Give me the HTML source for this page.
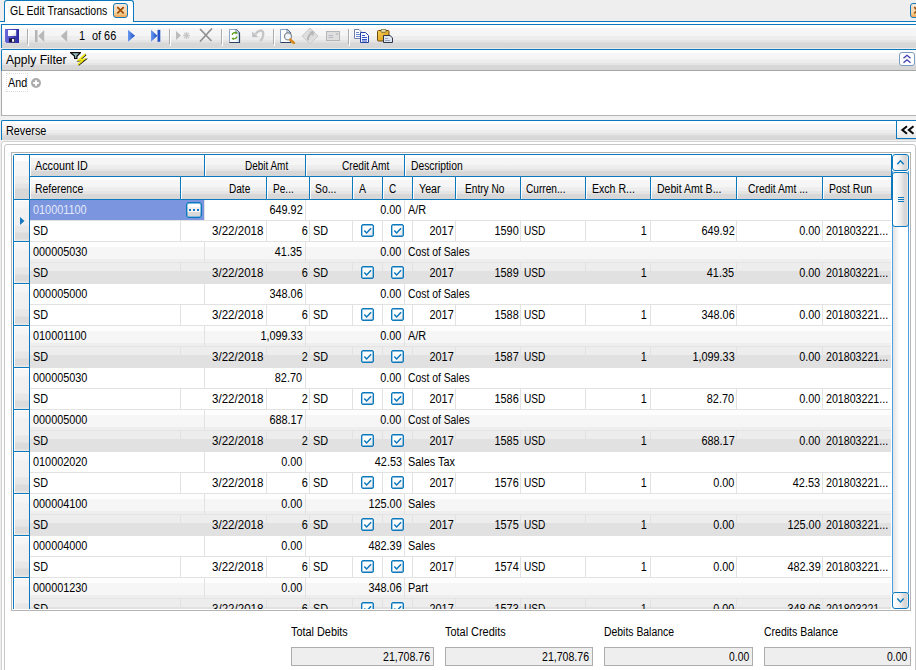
<!DOCTYPE html><html><head><meta charset="utf-8"><title>GL Edit Transactions</title><style>
*{box-sizing:border-box;margin:0;padding:0}
html,body{width:916px;height:670px;overflow:hidden;background:#eee}
body{position:relative;font-family:"Liberation Sans",sans-serif;font-size:11px;color:#000}
.a{position:absolute}
.t{position:absolute;white-space:nowrap;font-size:12px;line-height:13px;transform:scaleX(.906);transform-origin:0 0}
.t.r{transform-origin:100% 0}
.s{position:absolute;white-space:nowrap;font-size:12px;line-height:14px;transform-origin:0 0}
.glass{background:linear-gradient(#fff 0,#fff 14%,#f6f6f6 15%,#f5f5f5 46%,#eee 48%,#ededed 64%,#e5e5e5 66%,#e4e4e4 75%,#d8d8d8 77%,#d6d6d6 100%)}
.hd{position:absolute;background:linear-gradient(#fff 0,#fff 14%,#f6f6f6 15%,#f5f5f5 46%,#eee 48%,#ededed 64%,#e5e5e5 66%,#e4e4e4 75%,#d8d8d8 77%,#d6d6d6 100%);box-shadow:inset 1px 0 #fff}
.bl{position:absolute;background:#0c79bd}
.r{text-align:right}
.cb{position:absolute;width:13px;height:13px;border:1px solid #0c79bd;background:linear-gradient(135deg,#fff 0,#fff 45%,#e2e2e2 100%);border-radius:2px;box-shadow:inset 0 0 0 0.400px #0c79bd}
.hl{position:absolute;height:1px;background:#e2e2e2}
.vl{position:absolute;width:1px;background:#e2e2e2}
.alt{position:absolute;height:42px;background:linear-gradient(#fdfdfd 0,#fdfdfd 5px,#f6f6f6 5px,#f6f6f6 17px,#eee 17px,#eee 20px,#e4e4e4 20px,#e4e4e4 21px,#ededed 21px,#ededed 29px,#e1e1e1 29px,#e1e1e1 42px)}
.sel{position:absolute;width:15px;background:linear-gradient(#fff 0,#fff 1px,#f7f7f7 1px,#f5f5f5 8px,#f1f1f1 9px,#f0f0f0 25px,#e8e8e8 26px,#e7e7e7 32px,#dcdcdc 33px,#dbdbdb 39px,#e8e8e8 40px,#e8e8e8 41px);box-shadow:inset 1px 0 #fff}
</style></head><body>
<div class="a" style="left:0;top:21px;width:916px;height:4px;background:#fff;border-top:1px solid #0c79bd;border-bottom:1px solid #0c79bd"></div>
<div class="a" style="left:0;top:24px;width:1px;height:120px;background:#eee"></div>
<div class="a" style="left:4px;top:0;width:130px;height:22px;background:#fff;border:1px solid #0c79bd;border-bottom:none;border-radius:3px 3px 0 0"></div>
<div class="a" style="left:5px;top:21px;width:128px;height:1px;background:#fff"></div>
<div class="s" style="left:9.5px;top:4px;transform:scaleX(0.877);">GL Edit Transactions</div>
<div class="a" style="left:113px;top:3px;width:15px;height:15px;border:1px solid #1478b8;border-radius:3px;background:linear-gradient(#f3ebe2 0,#f6dcc0 25%,#fbd2a4 70%,#ecc88c 72%,#ecc88c 84%,#fbb060 86%)"></div>
<svg class="a" style="left:113px;top:3px" width="15" height="15" viewBox="0 0 15 15"><path d="M4.300 4.200L10.700 10.300M10.700 4.200L4.300 10.300" stroke="#9c4c00" stroke-width="1.700" fill="none"/></svg>
<div class="a" style="left:910px;top:3px;width:15px;height:15px;border:1px solid #1478b8;border-radius:3px;background:linear-gradient(#f3ebe2 0,#f6dcc0 25%,#fbd2a4 70%,#ecc88c 72%,#ecc88c 84%,#fbb060 86%)"></div>
<svg class="a" style="left:910px;top:3px" width="15" height="15" viewBox="0 0 15 15"><path d="M4.300 4.200L10.700 10.300M10.700 4.200L4.300 10.300" stroke="#9c4c00" stroke-width="1.700" fill="none"/></svg>
<div class="a glass" style="left:1px;top:25px;width:915px;height:23px;border-left:1px solid #0c79bd"></div>
<div class="a" style="left:1px;top:48px;width:915px;height:1px;background:#ececec"></div>
<svg class="a" style="left:5px;top:29px" width="14" height="14" viewBox="0 0 14 14"><defs><linearGradient id="sv" x1="0" x2="1"><stop offset="0" stop-color="#6e6cdc"/><stop offset="1" stop-color="#2a28a0"/></linearGradient><linearGradient id="sw" x1="0" y1="0" x2="1" y2="1"><stop offset="0.550" stop-color="#fff"/><stop offset="1" stop-color="#cdcdd6"/></linearGradient></defs><path d="M0 0H14V14H1.500L0 12.500Z" fill="url(#sv)"/><rect x="3" y="1" width="8.200" height="6" fill="url(#sw)"/><rect x="4" y="9.300" width="6" height="4" fill="#16163c"/><rect x="7" y="10" width="2.200" height="2.800" fill="#f0f0f6"/></svg>
<div class="a" style="left:27px;top:29px;width:1px;height:15px;background:#acacac"></div><div class="a" style="left:28px;top:29px;width:1px;height:17px;background:#fff"></div>
<svg class="a" style="left:34px;top:29px" width="12" height="14" viewBox="0 0 12 14"><rect x="1" y="1" width="2.500" height="12" fill="#b4b4b4"/><path d="M10.200 1L10.200 13L4.200 7Z" fill="#b8b8b8"/></svg>
<svg class="a" style="left:59px;top:29px" width="10" height="14" viewBox="0 0 10 14"><path d="M8.200 1L8.200 13L1.800 7Z" fill="#b8b8b8"/></svg>
<div class="t" style="left:79px;top:30px">1</div><div class="t" style="left:91.500px;top:30px">of 66</div>
<svg class="a" style="left:127px;top:29px" width="10" height="14" viewBox="0 0 10 14"><defs><linearGradient id="bt" x1="0" x2="1"><stop offset="0" stop-color="#6a9af0"/><stop offset="1" stop-color="#1c4cc0"/></linearGradient></defs><path d="M1 0.800L1 12.800L8 6.800Z" fill="url(#bt)"/></svg>
<svg class="a" style="left:150px;top:29px" width="12" height="14" viewBox="0 0 12 14"><path d="M1 0.800L1 12.800L7.500 6.800Z" fill="url(#bt)"/><rect x="7.500" y="0.800" width="2.800" height="12" fill="#2454c8"/></svg>
<div class="a" style="left:169px;top:29px;width:1px;height:15px;background:#acacac"></div><div class="a" style="left:170px;top:29px;width:1px;height:17px;background:#fff"></div>
<svg class="a" style="left:175px;top:30px" width="17" height="12" viewBox="0 0 17 12"><path d="M1 1L1 10L6 5.500Z" fill="#bcbcbc"/><path d="M11.500 2v7M8 5.500h7M9 3l5 5M14 3l-5 5" stroke="#c8c8c8" stroke-width="1.200"/></svg>
<svg class="a" style="left:198px;top:28px" width="16" height="15" viewBox="0 0 16 15"><path d="M2.500 1.500L13 12.500M13.500 1L2.500 13" stroke="#909090" stroke-width="1.700" fill="none" stroke-linecap="round"/></svg>
<div class="a" style="left:221px;top:29px;width:1px;height:15px;background:#acacac"></div><div class="a" style="left:222px;top:29px;width:1px;height:17px;background:#fff"></div>
<svg class="a" style="left:229px;top:29px" width="12" height="14" viewBox="0 0 12 14"><defs><linearGradient id="dg" x1="0" x2="1"><stop offset="0.500" stop-color="#fff"/><stop offset="1" stop-color="#d4e2f4"/></linearGradient></defs><path d="M0.500 0.500H7L10.500 4V13.500H0.500Z" fill="url(#dg)" stroke="#8ea6c6"/><path d="M7 0.500L10.500 4V13.500H0.500" fill="none" stroke="#2c4460" stroke-width="1.200"/><path d="M7 0.500V4H10.500" fill="#e4ecf8" stroke="#5a7090" stroke-width="0.700"/><path d="M3.200 5.800C3.500 4 5.500 3.300 7 3.600M7.800 7.600C7.500 9.600 5.500 10 4 9.700" stroke="#5c9c18" stroke-width="1.300" fill="none"/><path d="M6.500 2.200L8.600 3.900L6.300 5.200Z M4.500 8.300L2.400 9.600L4.700 11.200Z" fill="#5c9c18"/></svg>
<svg class="a" style="left:250px;top:28px" width="16" height="15" viewBox="0 0 16 15"><path d="M5.500 6.200C8 2.200 13 0.800 13.200 5.500C13.300 9 12 11.500 10.200 13" stroke="#c6c6c6" stroke-width="2.400" fill="none"/><path d="M2 3.500L2.300 9.300L8.300 9Z" fill="#c0c0c4"/></svg>
<div class="a" style="left:273px;top:29px;width:1px;height:15px;background:#acacac"></div><div class="a" style="left:274px;top:29px;width:1px;height:17px;background:#fff"></div>
<svg class="a" style="left:280px;top:29px" width="16" height="15" viewBox="0 0 16 15"><path d="M0.500 0.500H7L10.500 4V13.500H0.500Z" fill="#fff" stroke="#86a2c6"/><path d="M7 0.500L10.500 4V13.500H0.500" fill="none" stroke="#2c4460" stroke-width="1.200"/><path d="M7 0.500V4H10.500" fill="#e4ecf8" stroke="#5a7090" stroke-width="0.700"/><circle cx="8" cy="7.400" r="3.500" fill="#eef6fd" stroke="#8a8e94" stroke-width="1.300"/><path d="M10.300 10.700L13.800 14" stroke="#d8881c" stroke-width="2.600" stroke-linecap="round"/></svg>
<svg class="a" style="left:301px;top:27px" width="18" height="18" viewBox="0 0 18 18"><path d="M9 1L17 9L9 17L1 9Z" fill="#dedede" stroke="#cacaca"/><path d="M6.900 13.300C6.800 10 7.600 8.200 10.300 6.600" stroke="#b6b6b6" stroke-width="2" fill="none"/><path d="M8 4.700L13.100 4L12.300 9.200Z" fill="#b6b6b6"/></svg>
<svg class="a" style="left:326px;top:31px" width="14" height="10" viewBox="0 0 14 10"><rect x="0.500" y="0.500" width="13" height="9" fill="#dfdfdf" stroke="#b6b6b6"/><path d="M2.500 4.500H7M2.500 6.500H7" stroke="#b8b8c4"/><rect x="10" y="2" width="2" height="2" fill="#c4c4c4"/></svg>
<div class="a" style="left:348px;top:29px;width:1px;height:15px;background:#acacac"></div><div class="a" style="left:349px;top:29px;width:1px;height:17px;background:#fff"></div>
<svg class="a" style="left:354px;top:29px" width="16" height="14" viewBox="0 0 16 14"><path d="M0.500 0.500H5L7.500 3V9.500H0.500Z" fill="#fff" stroke="#6e82aa"/><path d="M2 3.500H5M2 5.500H6M2 7.500H6" stroke="#6a8ad0"/><path d="M6.500 3.500H11.500L14.500 6.500V13.500H6.500Z" fill="#f4f6ff" stroke="#2440a0"/><path d="M8 6.500H11M8 8.500H13M8 10.500H13M8 12H13" stroke="#3458c8"/></svg>
<svg class="a" style="left:377px;top:29px" width="17" height="14" viewBox="0 0 17 14"><defs><linearGradient id="pg" x1="0" x2="1" y1="0" y2="1"><stop offset="0" stop-color="#f8d058"/><stop offset="1" stop-color="#d89410"/></linearGradient></defs><rect x="0.500" y="1.500" width="11.500" height="10.500" rx="1" fill="url(#pg)" stroke="#6a4a10"/><rect x="4" y="0.300" width="5" height="3" rx="0.800" fill="#e8e0b0" stroke="#6a5a20" stroke-width="0.800"/><path d="M6.500 6.500H13L15.500 8.800V13.500H6.500Z" fill="#dde5f1" stroke="#303848"/><path d="M8 9.500H11M8 11.500H13" stroke="#8494b4" stroke-width="0.800"/></svg>
<div class="a glass" style="left:1px;top:49px;width:915px;height:22px;border-top:1px solid #0c79bd;border-left:1px solid #0c79bd;border-bottom:1px solid #a6a6a6;border-radius:2px 0 0 0"></div>
<div class="s" style="left:5.8px;top:53px;transform:scaleX(1.010);">Apply Filter</div>
<svg class="a" style="left:69px;top:51px" width="20" height="16" viewBox="0 0 20 16"><path d="M1 1H12V2L8.500 5.500V8H5V5.500L1 2Z" fill="#101010"/><path d="M3.200 2.200H9.800L7.300 4.800V7H6.200V4.800Z" fill="#9cc4c4"/><path d="M16.800 3.500L10.300 9.400L15.800 8.800L9.300 14" stroke="#181818" stroke-width="1.900" fill="none"/><path d="M16.300 3.100L9.800 9L15.300 8.400L8.800 13.600" stroke="#f6ee10" stroke-width="1.500" fill="none"/></svg>
<div class="a" style="left:899px;top:52px;width:16px;height:14px;border:1px solid #7d9cc2;border-radius:3px;background:#fdfdfe"></div>
<svg class="a" style="left:899px;top:52px" width="16" height="14" viewBox="0 0 16 14"><path d="M4.500 6.200L8 3.300L11.500 6.200M4.500 10.700L8 7.800L11.500 10.700" stroke="#3c3cb0" stroke-width="1.300" fill="none"/></svg>
<div class="a" style="left:1px;top:71px;width:915px;height:45px;background:#fff;border-left:1px solid #aaa;border-bottom:1px solid #b4b4b4"></div>
<div class="a" style="left:6px;top:73px;width:22px;height:19px;border:1px dotted #dcdcdc"></div>
<div class="s" style="left:7.6px;top:76px;transform:scaleX(0.895);">And</div>
<svg class="a" style="left:30px;top:76.700px" width="12" height="12" viewBox="0 0 12 12"><circle cx="6" cy="6" r="5" fill="#adadad"/><path d="M6 3.200V8.800M3.200 6H8.800" stroke="#fff" stroke-width="2"/></svg>
<div class="a" style="left:1px;top:116px;width:915px;height:4px;background:#f0f0f0"></div>
<div class="a glass" style="left:1px;top:120px;width:915px;height:20px;border-top:1px solid #0c79bd;border-left:1px solid #0c79bd;border-radius:2px 0 0 0"></div>
<div class="s" style="left:5.8px;top:124px;transform:scaleX(0.904);">Reverse</div>
<div class="a" style="left:896px;top:121px;width:24px;height:18px;background:linear-gradient(#fff,#fff 40%,#e6e6e6);border:1px solid #0c79bd;border-top:none"></div>
<svg class="a" style="left:899px;top:124px" width="17" height="12" viewBox="0 0 17 12"><path d="M8 2.300L3.400 6L8 9.700M14.500 2.300L9.900 6L14.500 9.700" stroke="#0c0c0c" stroke-width="2.100" fill="none"/></svg>
<div class="a" style="left:1px;top:140px;width:915px;height:1px;background:#f0f0f0"></div>
<div class="a" style="left:1px;top:141px;width:920px;height:540px;border:1px solid #d2d2d2;border-radius:3px;background:#fff"></div>
<div class="a" style="left:4px;top:144px;width:912px;height:540px;border:1px solid #c6c6c6;border-radius:3px;background:#fff"></div>
<div class="a" style="left:11px;top:152px;width:900px;height:459px;border:1px solid #b4b4b4;background:#fff"></div>
<div class="a" style="left:13px;top:154px;width:879px;height:455px;border:1px solid #0c79bd;border-bottom:none;border-right:none;border-radius:3px 0 0 0"></div>
<div class="bl" style="left:891px;top:154px;width:1px;height:46px"></div>
<div class="hd" style="left:14px;top:155px;width:15px;height:44px"></div>
<div class="bl" style="left:29px;top:155px;width:1px;height:454px"></div>
<div class="bl" style="left:30px;top:176px;width:861px;height:1px"></div>
<div class="bl" style="left:14px;top:199px;width:877px;height:1px"></div>
<div class="hd" style="left:30px;top:155px;width:174px;height:21px"></div>
<div class="t" style="left:35.00px;top:160px;transform:scaleX(0.898)">Account ID</div>
<div class="hd" style="left:205px;top:155px;width:100px;height:21px"></div>
<div class="bl" style="left:204px;top:155px;width:1px;height:21px"></div>
<div class="t" style="left:244.60px;top:160px;transform:scaleX(0.830)">Debit Amt</div>
<div class="hd" style="left:306px;top:155px;width:98px;height:21px"></div>
<div class="bl" style="left:305px;top:155px;width:1px;height:21px"></div>
<div class="t" style="left:341.60px;top:160px;transform:scaleX(0.846)">Credit Amt</div>
<div class="hd" style="left:405px;top:155px;width:486px;height:21px"></div>
<div class="bl" style="left:404px;top:155px;width:1px;height:21px"></div>
<div class="t" style="left:410.50px;top:160px;transform:scaleX(0.860)">Description</div>
<div class="hd" style="left:30px;top:177px;width:150px;height:22px"></div>
<div class="t" style="left:35.00px;top:183px;transform:scaleX(0.871)">Reference</div>
<div class="hd" style="left:181px;top:177px;width:85px;height:22px"></div>
<div class="bl" style="left:180px;top:177px;width:1px;height:22px"></div>
<div class="t" style="left:229.40px;top:183px;transform:scaleX(0.838)">Date</div>
<div class="hd" style="left:267px;top:177px;width:42px;height:22px"></div>
<div class="bl" style="left:266px;top:177px;width:1px;height:22px"></div>
<div class="t" style="left:273.40px;top:183px;transform:scaleX(0.840)">Pe...</div>
<div class="hd" style="left:310px;top:177px;width:42px;height:22px"></div>
<div class="bl" style="left:309px;top:177px;width:1px;height:22px"></div>
<div class="t" style="left:315.00px;top:183px;transform:scaleX(0.864)">So...</div>
<div class="hd" style="left:353px;top:177px;width:29px;height:22px"></div>
<div class="bl" style="left:352px;top:177px;width:1px;height:22px"></div>
<div class="t" style="left:358.80px;top:183px;transform:scaleX(0.875)">A</div>
<div class="hd" style="left:383px;top:177px;width:29px;height:22px"></div>
<div class="bl" style="left:382px;top:177px;width:1px;height:22px"></div>
<div class="t" style="left:388.50px;top:183px;transform:scaleX(0.833)">C</div>
<div class="hd" style="left:413px;top:177px;width:42px;height:22px"></div>
<div class="bl" style="left:412px;top:177px;width:1px;height:22px"></div>
<div class="t" style="left:419.20px;top:183px;transform:scaleX(0.888)">Year</div>
<div class="hd" style="left:456px;top:177px;width:64px;height:22px"></div>
<div class="bl" style="left:455px;top:177px;width:1px;height:22px"></div>
<div class="t" style="left:465.30px;top:183px;transform:scaleX(0.845)">Entry No</div>
<div class="hd" style="left:521px;top:177px;width:64px;height:22px"></div>
<div class="bl" style="left:520px;top:177px;width:1px;height:22px"></div>
<div class="t" style="left:525.50px;top:183px;transform:scaleX(0.845)">Curren...</div>
<div class="hd" style="left:586px;top:177px;width:64px;height:22px"></div>
<div class="bl" style="left:585px;top:177px;width:1px;height:22px"></div>
<div class="t" style="left:592.30px;top:183px;transform:scaleX(0.880)">Exch R...</div>
<div class="hd" style="left:651px;top:177px;width:85px;height:22px"></div>
<div class="bl" style="left:650px;top:177px;width:1px;height:22px"></div>
<div class="t" style="left:657.20px;top:183px;transform:scaleX(0.878)">Debit Amt B...</div>
<div class="hd" style="left:737px;top:177px;width:85px;height:22px"></div>
<div class="bl" style="left:736px;top:177px;width:1px;height:22px"></div>
<div class="t" style="left:747.50px;top:183px;transform:scaleX(0.862)">Credit Amt ...</div>
<div class="hd" style="left:823px;top:177px;width:68px;height:22px"></div>
<div class="bl" style="left:822px;top:177px;width:1px;height:22px"></div>
<div class="t" style="left:828.50px;top:183px;transform:scaleX(0.873)">Post Run</div>
<div class="a" style="left:14px;top:200px;width:877px;height:409px;overflow:hidden">
<div class="sel" style="left:0;top:0px;height:41px"></div><div class="bl" style="left:0;top:41px;width:15px;height:1px"></div>
<div class="hl" style="left:16px;top:20px;width:861px"></div>
<div class="hl" style="left:16px;top:41px;width:861px"></div>
<div class="vl" style="left:190px;top:0px;height:21px"></div>
<div class="vl" style="left:291px;top:0px;height:21px"></div>
<div class="vl" style="left:390px;top:0px;height:21px"></div>
<div class="vl" style="left:166px;top:21px;height:21px"></div>
<div class="vl" style="left:252px;top:21px;height:21px"></div>
<div class="vl" style="left:295px;top:21px;height:21px"></div>
<div class="vl" style="left:338px;top:21px;height:21px"></div>
<div class="vl" style="left:368px;top:21px;height:21px"></div>
<div class="vl" style="left:398px;top:21px;height:21px"></div>
<div class="vl" style="left:441px;top:21px;height:21px"></div>
<div class="vl" style="left:506px;top:21px;height:21px"></div>
<div class="vl" style="left:571px;top:21px;height:21px"></div>
<div class="vl" style="left:636px;top:21px;height:21px"></div>
<div class="vl" style="left:722px;top:21px;height:21px"></div>
<div class="vl" style="left:808px;top:21px;height:21px"></div>
<div class="a" style="left:16px;top:0;width:174px;height:20px;background:#7b95de"></div>
<div class="a" style="left:172px;top:2px;width:16px;height:16px;background:linear-gradient(#fff 0,#fff 28%,#f1f1f1 30%,#f0f0f0 48%,#f8f8f8 50%,#f8f8f8 62%,#d9d9d9 65%,#d8d8d8 90%,#fff 96%);border:1px solid #0c79bd;border-radius:3px;box-shadow:inset 0 0 0 0.400px #0c79bd"></div>
<div class="a" style="left:175px;top:9px;width:2px;height:2px;background:#1478c0;box-shadow:4px 0 #1478c0,8px 0 #1478c0"></div>
<svg class="a" style="left:6px;top:17px" width="5" height="8" viewBox="0 0 5 8"><path d="M0 0L4.500 4L0 8Z" fill="#1478c0"/></svg>
<div class="t" style="left:19.2px;top:4px;color:#e2e9fb">010001100</div>
<div class="t r" style="right:588.7px;top:4px">649.92</div>
<div class="t r" style="right:489.2px;top:4px">0.00</div>
<div class="t" style="left:393.5px;top:4px">A/R</div>
<div class="t" style="left:19.2px;top:25px">SD</div>
<div class="t" style="left:198.20px;top:25px;transform:scaleX(0.963)">3/22/2018</div>
<div class="t r" style="right:583.7px;top:25px">6</div>
<div class="t" style="left:299px;top:25px">SD</div>
<div class="cb" style="left:347px;top:24px"></div><svg class="a" style="left:347px;top:24px" width="13" height="13" viewBox="0 0 13 13"><path d="M3.300 6.400L5.600 9L10.100 4.300" stroke="#0c79bd" stroke-width="1.500" fill="none"/></svg>
<div class="cb" style="left:377px;top:24px"></div><svg class="a" style="left:377px;top:24px" width="13" height="13" viewBox="0 0 13 13"><path d="M3.300 6.400L5.600 9L10.100 4.300" stroke="#0c79bd" stroke-width="1.500" fill="none"/></svg>
<div class="t r" style="right:437.7px;top:25px">2017</div>
<div class="t r" style="right:372.7px;top:25px">1590</div>
<div class="t" style="left:510.40px;top:25px;transform:scaleX(0.842)">USD</div>
<div class="t r" style="right:244.3px;top:25px">1</div>
<div class="t r" style="right:156.7px;top:25px">649.92</div>
<div class="t r" style="right:70.7px;top:25px">0.00</div>
<div class="t" style="left:811.90px;top:25px;transform:scaleX(0.887)">201803221...</div>
<div class="sel" style="left:0;top:42px;height:41px"></div><div class="bl" style="left:0;top:83px;width:15px;height:1px"></div>
<div class="alt" style="left:16px;top:42px;width:861px"></div>
<div class="vl" style="left:190px;top:42px;height:21px"></div>
<div class="vl" style="left:291px;top:42px;height:21px"></div>
<div class="vl" style="left:390px;top:42px;height:21px"></div>
<div class="vl" style="left:166px;top:63px;height:21px"></div>
<div class="vl" style="left:252px;top:63px;height:21px"></div>
<div class="vl" style="left:295px;top:63px;height:21px"></div>
<div class="vl" style="left:338px;top:63px;height:21px"></div>
<div class="vl" style="left:368px;top:63px;height:21px"></div>
<div class="vl" style="left:398px;top:63px;height:21px"></div>
<div class="vl" style="left:441px;top:63px;height:21px"></div>
<div class="vl" style="left:506px;top:63px;height:21px"></div>
<div class="vl" style="left:571px;top:63px;height:21px"></div>
<div class="vl" style="left:636px;top:63px;height:21px"></div>
<div class="vl" style="left:722px;top:63px;height:21px"></div>
<div class="vl" style="left:808px;top:63px;height:21px"></div>
<div class="t" style="left:19.2px;top:46px;color:#000">000005030</div>
<div class="t r" style="right:588.7px;top:46px">41.35</div>
<div class="t r" style="right:489.2px;top:46px">0.00</div>
<div class="t" style="left:394.00px;top:46px;transform:scaleX(0.863)">Cost of Sales</div>
<div class="t" style="left:19.2px;top:67px">SD</div>
<div class="t" style="left:198.20px;top:67px;transform:scaleX(0.963)">3/22/2018</div>
<div class="t r" style="right:583.7px;top:67px">6</div>
<div class="t" style="left:299px;top:67px">SD</div>
<div class="cb" style="left:347px;top:66px"></div><svg class="a" style="left:347px;top:66px" width="13" height="13" viewBox="0 0 13 13"><path d="M3.300 6.400L5.600 9L10.100 4.300" stroke="#0c79bd" stroke-width="1.500" fill="none"/></svg>
<div class="cb" style="left:377px;top:66px"></div><svg class="a" style="left:377px;top:66px" width="13" height="13" viewBox="0 0 13 13"><path d="M3.300 6.400L5.600 9L10.100 4.300" stroke="#0c79bd" stroke-width="1.500" fill="none"/></svg>
<div class="t r" style="right:437.7px;top:67px">2017</div>
<div class="t r" style="right:372.7px;top:67px">1589</div>
<div class="t" style="left:510.40px;top:67px;transform:scaleX(0.842)">USD</div>
<div class="t r" style="right:244.3px;top:67px">1</div>
<div class="t r" style="right:156.7px;top:67px">41.35</div>
<div class="t r" style="right:70.7px;top:67px">0.00</div>
<div class="t" style="left:811.90px;top:67px;transform:scaleX(0.887)">201803221...</div>
<div class="sel" style="left:0;top:84px;height:41px"></div><div class="bl" style="left:0;top:125px;width:15px;height:1px"></div>
<div class="hl" style="left:16px;top:104px;width:861px"></div>
<div class="hl" style="left:16px;top:125px;width:861px"></div>
<div class="vl" style="left:190px;top:84px;height:21px"></div>
<div class="vl" style="left:291px;top:84px;height:21px"></div>
<div class="vl" style="left:390px;top:84px;height:21px"></div>
<div class="vl" style="left:166px;top:105px;height:21px"></div>
<div class="vl" style="left:252px;top:105px;height:21px"></div>
<div class="vl" style="left:295px;top:105px;height:21px"></div>
<div class="vl" style="left:338px;top:105px;height:21px"></div>
<div class="vl" style="left:368px;top:105px;height:21px"></div>
<div class="vl" style="left:398px;top:105px;height:21px"></div>
<div class="vl" style="left:441px;top:105px;height:21px"></div>
<div class="vl" style="left:506px;top:105px;height:21px"></div>
<div class="vl" style="left:571px;top:105px;height:21px"></div>
<div class="vl" style="left:636px;top:105px;height:21px"></div>
<div class="vl" style="left:722px;top:105px;height:21px"></div>
<div class="vl" style="left:808px;top:105px;height:21px"></div>
<div class="t" style="left:19.2px;top:88px;color:#000">000005000</div>
<div class="t r" style="right:588.7px;top:88px">348.06</div>
<div class="t r" style="right:489.2px;top:88px">0.00</div>
<div class="t" style="left:394.00px;top:88px;transform:scaleX(0.863)">Cost of Sales</div>
<div class="t" style="left:19.2px;top:109px">SD</div>
<div class="t" style="left:198.20px;top:109px;transform:scaleX(0.963)">3/22/2018</div>
<div class="t r" style="right:583.7px;top:109px">6</div>
<div class="t" style="left:299px;top:109px">SD</div>
<div class="cb" style="left:347px;top:108px"></div><svg class="a" style="left:347px;top:108px" width="13" height="13" viewBox="0 0 13 13"><path d="M3.300 6.400L5.600 9L10.100 4.300" stroke="#0c79bd" stroke-width="1.500" fill="none"/></svg>
<div class="cb" style="left:377px;top:108px"></div><svg class="a" style="left:377px;top:108px" width="13" height="13" viewBox="0 0 13 13"><path d="M3.300 6.400L5.600 9L10.100 4.300" stroke="#0c79bd" stroke-width="1.500" fill="none"/></svg>
<div class="t r" style="right:437.7px;top:109px">2017</div>
<div class="t r" style="right:372.7px;top:109px">1588</div>
<div class="t" style="left:510.40px;top:109px;transform:scaleX(0.842)">USD</div>
<div class="t r" style="right:244.3px;top:109px">1</div>
<div class="t r" style="right:156.7px;top:109px">348.06</div>
<div class="t r" style="right:70.7px;top:109px">0.00</div>
<div class="t" style="left:811.90px;top:109px;transform:scaleX(0.887)">201803221...</div>
<div class="sel" style="left:0;top:126px;height:41px"></div><div class="bl" style="left:0;top:167px;width:15px;height:1px"></div>
<div class="alt" style="left:16px;top:126px;width:861px"></div>
<div class="vl" style="left:190px;top:126px;height:21px"></div>
<div class="vl" style="left:291px;top:126px;height:21px"></div>
<div class="vl" style="left:390px;top:126px;height:21px"></div>
<div class="vl" style="left:166px;top:147px;height:21px"></div>
<div class="vl" style="left:252px;top:147px;height:21px"></div>
<div class="vl" style="left:295px;top:147px;height:21px"></div>
<div class="vl" style="left:338px;top:147px;height:21px"></div>
<div class="vl" style="left:368px;top:147px;height:21px"></div>
<div class="vl" style="left:398px;top:147px;height:21px"></div>
<div class="vl" style="left:441px;top:147px;height:21px"></div>
<div class="vl" style="left:506px;top:147px;height:21px"></div>
<div class="vl" style="left:571px;top:147px;height:21px"></div>
<div class="vl" style="left:636px;top:147px;height:21px"></div>
<div class="vl" style="left:722px;top:147px;height:21px"></div>
<div class="vl" style="left:808px;top:147px;height:21px"></div>
<div class="t" style="left:19.2px;top:130px;color:#000">010001100</div>
<div class="t r" style="right:588.7px;top:130px">1,099.33</div>
<div class="t r" style="right:489.2px;top:130px">0.00</div>
<div class="t" style="left:393.5px;top:130px">A/R</div>
<div class="t" style="left:19.2px;top:151px">SD</div>
<div class="t" style="left:198.20px;top:151px;transform:scaleX(0.963)">3/22/2018</div>
<div class="t r" style="right:583.7px;top:151px">2</div>
<div class="t" style="left:299px;top:151px">SD</div>
<div class="cb" style="left:347px;top:150px"></div><svg class="a" style="left:347px;top:150px" width="13" height="13" viewBox="0 0 13 13"><path d="M3.300 6.400L5.600 9L10.100 4.300" stroke="#0c79bd" stroke-width="1.500" fill="none"/></svg>
<div class="cb" style="left:377px;top:150px"></div><svg class="a" style="left:377px;top:150px" width="13" height="13" viewBox="0 0 13 13"><path d="M3.300 6.400L5.600 9L10.100 4.300" stroke="#0c79bd" stroke-width="1.500" fill="none"/></svg>
<div class="t r" style="right:437.7px;top:151px">2017</div>
<div class="t r" style="right:372.7px;top:151px">1587</div>
<div class="t" style="left:510.40px;top:151px;transform:scaleX(0.842)">USD</div>
<div class="t r" style="right:244.3px;top:151px">1</div>
<div class="t r" style="right:156.7px;top:151px">1,099.33</div>
<div class="t r" style="right:70.7px;top:151px">0.00</div>
<div class="t" style="left:811.90px;top:151px;transform:scaleX(0.887)">201803221...</div>
<div class="sel" style="left:0;top:168px;height:41px"></div><div class="bl" style="left:0;top:209px;width:15px;height:1px"></div>
<div class="hl" style="left:16px;top:188px;width:861px"></div>
<div class="hl" style="left:16px;top:209px;width:861px"></div>
<div class="vl" style="left:190px;top:168px;height:21px"></div>
<div class="vl" style="left:291px;top:168px;height:21px"></div>
<div class="vl" style="left:390px;top:168px;height:21px"></div>
<div class="vl" style="left:166px;top:189px;height:21px"></div>
<div class="vl" style="left:252px;top:189px;height:21px"></div>
<div class="vl" style="left:295px;top:189px;height:21px"></div>
<div class="vl" style="left:338px;top:189px;height:21px"></div>
<div class="vl" style="left:368px;top:189px;height:21px"></div>
<div class="vl" style="left:398px;top:189px;height:21px"></div>
<div class="vl" style="left:441px;top:189px;height:21px"></div>
<div class="vl" style="left:506px;top:189px;height:21px"></div>
<div class="vl" style="left:571px;top:189px;height:21px"></div>
<div class="vl" style="left:636px;top:189px;height:21px"></div>
<div class="vl" style="left:722px;top:189px;height:21px"></div>
<div class="vl" style="left:808px;top:189px;height:21px"></div>
<div class="t" style="left:19.2px;top:172px;color:#000">000005030</div>
<div class="t r" style="right:588.7px;top:172px">82.70</div>
<div class="t r" style="right:489.2px;top:172px">0.00</div>
<div class="t" style="left:394.00px;top:172px;transform:scaleX(0.863)">Cost of Sales</div>
<div class="t" style="left:19.2px;top:193px">SD</div>
<div class="t" style="left:198.20px;top:193px;transform:scaleX(0.963)">3/22/2018</div>
<div class="t r" style="right:583.7px;top:193px">2</div>
<div class="t" style="left:299px;top:193px">SD</div>
<div class="cb" style="left:347px;top:192px"></div><svg class="a" style="left:347px;top:192px" width="13" height="13" viewBox="0 0 13 13"><path d="M3.300 6.400L5.600 9L10.100 4.300" stroke="#0c79bd" stroke-width="1.500" fill="none"/></svg>
<div class="cb" style="left:377px;top:192px"></div><svg class="a" style="left:377px;top:192px" width="13" height="13" viewBox="0 0 13 13"><path d="M3.300 6.400L5.600 9L10.100 4.300" stroke="#0c79bd" stroke-width="1.500" fill="none"/></svg>
<div class="t r" style="right:437.7px;top:193px">2017</div>
<div class="t r" style="right:372.7px;top:193px">1586</div>
<div class="t" style="left:510.40px;top:193px;transform:scaleX(0.842)">USD</div>
<div class="t r" style="right:244.3px;top:193px">1</div>
<div class="t r" style="right:156.7px;top:193px">82.70</div>
<div class="t r" style="right:70.7px;top:193px">0.00</div>
<div class="t" style="left:811.90px;top:193px;transform:scaleX(0.887)">201803221...</div>
<div class="sel" style="left:0;top:210px;height:41px"></div><div class="bl" style="left:0;top:251px;width:15px;height:1px"></div>
<div class="alt" style="left:16px;top:210px;width:861px"></div>
<div class="vl" style="left:190px;top:210px;height:21px"></div>
<div class="vl" style="left:291px;top:210px;height:21px"></div>
<div class="vl" style="left:390px;top:210px;height:21px"></div>
<div class="vl" style="left:166px;top:231px;height:21px"></div>
<div class="vl" style="left:252px;top:231px;height:21px"></div>
<div class="vl" style="left:295px;top:231px;height:21px"></div>
<div class="vl" style="left:338px;top:231px;height:21px"></div>
<div class="vl" style="left:368px;top:231px;height:21px"></div>
<div class="vl" style="left:398px;top:231px;height:21px"></div>
<div class="vl" style="left:441px;top:231px;height:21px"></div>
<div class="vl" style="left:506px;top:231px;height:21px"></div>
<div class="vl" style="left:571px;top:231px;height:21px"></div>
<div class="vl" style="left:636px;top:231px;height:21px"></div>
<div class="vl" style="left:722px;top:231px;height:21px"></div>
<div class="vl" style="left:808px;top:231px;height:21px"></div>
<div class="t" style="left:19.2px;top:214px;color:#000">000005000</div>
<div class="t r" style="right:588.7px;top:214px">688.17</div>
<div class="t r" style="right:489.2px;top:214px">0.00</div>
<div class="t" style="left:394.00px;top:214px;transform:scaleX(0.863)">Cost of Sales</div>
<div class="t" style="left:19.2px;top:235px">SD</div>
<div class="t" style="left:198.20px;top:235px;transform:scaleX(0.963)">3/22/2018</div>
<div class="t r" style="right:583.7px;top:235px">2</div>
<div class="t" style="left:299px;top:235px">SD</div>
<div class="cb" style="left:347px;top:234px"></div><svg class="a" style="left:347px;top:234px" width="13" height="13" viewBox="0 0 13 13"><path d="M3.300 6.400L5.600 9L10.100 4.300" stroke="#0c79bd" stroke-width="1.500" fill="none"/></svg>
<div class="cb" style="left:377px;top:234px"></div><svg class="a" style="left:377px;top:234px" width="13" height="13" viewBox="0 0 13 13"><path d="M3.300 6.400L5.600 9L10.100 4.300" stroke="#0c79bd" stroke-width="1.500" fill="none"/></svg>
<div class="t r" style="right:437.7px;top:235px">2017</div>
<div class="t r" style="right:372.7px;top:235px">1585</div>
<div class="t" style="left:510.40px;top:235px;transform:scaleX(0.842)">USD</div>
<div class="t r" style="right:244.3px;top:235px">1</div>
<div class="t r" style="right:156.7px;top:235px">688.17</div>
<div class="t r" style="right:70.7px;top:235px">0.00</div>
<div class="t" style="left:811.90px;top:235px;transform:scaleX(0.887)">201803221...</div>
<div class="sel" style="left:0;top:252px;height:41px"></div><div class="bl" style="left:0;top:293px;width:15px;height:1px"></div>
<div class="hl" style="left:16px;top:272px;width:861px"></div>
<div class="hl" style="left:16px;top:293px;width:861px"></div>
<div class="vl" style="left:190px;top:252px;height:21px"></div>
<div class="vl" style="left:291px;top:252px;height:21px"></div>
<div class="vl" style="left:390px;top:252px;height:21px"></div>
<div class="vl" style="left:166px;top:273px;height:21px"></div>
<div class="vl" style="left:252px;top:273px;height:21px"></div>
<div class="vl" style="left:295px;top:273px;height:21px"></div>
<div class="vl" style="left:338px;top:273px;height:21px"></div>
<div class="vl" style="left:368px;top:273px;height:21px"></div>
<div class="vl" style="left:398px;top:273px;height:21px"></div>
<div class="vl" style="left:441px;top:273px;height:21px"></div>
<div class="vl" style="left:506px;top:273px;height:21px"></div>
<div class="vl" style="left:571px;top:273px;height:21px"></div>
<div class="vl" style="left:636px;top:273px;height:21px"></div>
<div class="vl" style="left:722px;top:273px;height:21px"></div>
<div class="vl" style="left:808px;top:273px;height:21px"></div>
<div class="t" style="left:19.2px;top:256px;color:#000">010002020</div>
<div class="t r" style="right:588.7px;top:256px">0.00</div>
<div class="t r" style="right:489.2px;top:256px">42.53</div>
<div class="t" style="left:393.5px;top:256px">Sales Tax</div>
<div class="t" style="left:19.2px;top:277px">SD</div>
<div class="t" style="left:198.20px;top:277px;transform:scaleX(0.963)">3/22/2018</div>
<div class="t r" style="right:583.7px;top:277px">6</div>
<div class="t" style="left:299px;top:277px">SD</div>
<div class="cb" style="left:347px;top:276px"></div><svg class="a" style="left:347px;top:276px" width="13" height="13" viewBox="0 0 13 13"><path d="M3.300 6.400L5.600 9L10.100 4.300" stroke="#0c79bd" stroke-width="1.500" fill="none"/></svg>
<div class="cb" style="left:377px;top:276px"></div><svg class="a" style="left:377px;top:276px" width="13" height="13" viewBox="0 0 13 13"><path d="M3.300 6.400L5.600 9L10.100 4.300" stroke="#0c79bd" stroke-width="1.500" fill="none"/></svg>
<div class="t r" style="right:437.7px;top:277px">2017</div>
<div class="t r" style="right:372.7px;top:277px">1576</div>
<div class="t" style="left:510.40px;top:277px;transform:scaleX(0.842)">USD</div>
<div class="t r" style="right:244.3px;top:277px">1</div>
<div class="t r" style="right:156.7px;top:277px">0.00</div>
<div class="t r" style="right:70.7px;top:277px">42.53</div>
<div class="t" style="left:811.90px;top:277px;transform:scaleX(0.887)">201803221...</div>
<div class="sel" style="left:0;top:294px;height:41px"></div><div class="bl" style="left:0;top:335px;width:15px;height:1px"></div>
<div class="alt" style="left:16px;top:294px;width:861px"></div>
<div class="vl" style="left:190px;top:294px;height:21px"></div>
<div class="vl" style="left:291px;top:294px;height:21px"></div>
<div class="vl" style="left:390px;top:294px;height:21px"></div>
<div class="vl" style="left:166px;top:315px;height:21px"></div>
<div class="vl" style="left:252px;top:315px;height:21px"></div>
<div class="vl" style="left:295px;top:315px;height:21px"></div>
<div class="vl" style="left:338px;top:315px;height:21px"></div>
<div class="vl" style="left:368px;top:315px;height:21px"></div>
<div class="vl" style="left:398px;top:315px;height:21px"></div>
<div class="vl" style="left:441px;top:315px;height:21px"></div>
<div class="vl" style="left:506px;top:315px;height:21px"></div>
<div class="vl" style="left:571px;top:315px;height:21px"></div>
<div class="vl" style="left:636px;top:315px;height:21px"></div>
<div class="vl" style="left:722px;top:315px;height:21px"></div>
<div class="vl" style="left:808px;top:315px;height:21px"></div>
<div class="t" style="left:19.2px;top:298px;color:#000">000004100</div>
<div class="t r" style="right:588.7px;top:298px">0.00</div>
<div class="t r" style="right:489.2px;top:298px">125.00</div>
<div class="t" style="left:393.5px;top:298px">Sales</div>
<div class="t" style="left:19.2px;top:319px">SD</div>
<div class="t" style="left:198.20px;top:319px;transform:scaleX(0.963)">3/22/2018</div>
<div class="t r" style="right:583.7px;top:319px">6</div>
<div class="t" style="left:299px;top:319px">SD</div>
<div class="cb" style="left:347px;top:318px"></div><svg class="a" style="left:347px;top:318px" width="13" height="13" viewBox="0 0 13 13"><path d="M3.300 6.400L5.600 9L10.100 4.300" stroke="#0c79bd" stroke-width="1.500" fill="none"/></svg>
<div class="cb" style="left:377px;top:318px"></div><svg class="a" style="left:377px;top:318px" width="13" height="13" viewBox="0 0 13 13"><path d="M3.300 6.400L5.600 9L10.100 4.300" stroke="#0c79bd" stroke-width="1.500" fill="none"/></svg>
<div class="t r" style="right:437.7px;top:319px">2017</div>
<div class="t r" style="right:372.7px;top:319px">1575</div>
<div class="t" style="left:510.40px;top:319px;transform:scaleX(0.842)">USD</div>
<div class="t r" style="right:244.3px;top:319px">1</div>
<div class="t r" style="right:156.7px;top:319px">0.00</div>
<div class="t r" style="right:70.7px;top:319px">125.00</div>
<div class="t" style="left:811.90px;top:319px;transform:scaleX(0.887)">201803221...</div>
<div class="sel" style="left:0;top:336px;height:41px"></div><div class="bl" style="left:0;top:377px;width:15px;height:1px"></div>
<div class="hl" style="left:16px;top:356px;width:861px"></div>
<div class="hl" style="left:16px;top:377px;width:861px"></div>
<div class="vl" style="left:190px;top:336px;height:21px"></div>
<div class="vl" style="left:291px;top:336px;height:21px"></div>
<div class="vl" style="left:390px;top:336px;height:21px"></div>
<div class="vl" style="left:166px;top:357px;height:21px"></div>
<div class="vl" style="left:252px;top:357px;height:21px"></div>
<div class="vl" style="left:295px;top:357px;height:21px"></div>
<div class="vl" style="left:338px;top:357px;height:21px"></div>
<div class="vl" style="left:368px;top:357px;height:21px"></div>
<div class="vl" style="left:398px;top:357px;height:21px"></div>
<div class="vl" style="left:441px;top:357px;height:21px"></div>
<div class="vl" style="left:506px;top:357px;height:21px"></div>
<div class="vl" style="left:571px;top:357px;height:21px"></div>
<div class="vl" style="left:636px;top:357px;height:21px"></div>
<div class="vl" style="left:722px;top:357px;height:21px"></div>
<div class="vl" style="left:808px;top:357px;height:21px"></div>
<div class="t" style="left:19.2px;top:340px;color:#000">000004000</div>
<div class="t r" style="right:588.7px;top:340px">0.00</div>
<div class="t r" style="right:489.2px;top:340px">482.39</div>
<div class="t" style="left:393.5px;top:340px">Sales</div>
<div class="t" style="left:19.2px;top:361px">SD</div>
<div class="t" style="left:198.20px;top:361px;transform:scaleX(0.963)">3/22/2018</div>
<div class="t r" style="right:583.7px;top:361px">6</div>
<div class="t" style="left:299px;top:361px">SD</div>
<div class="cb" style="left:347px;top:360px"></div><svg class="a" style="left:347px;top:360px" width="13" height="13" viewBox="0 0 13 13"><path d="M3.300 6.400L5.600 9L10.100 4.300" stroke="#0c79bd" stroke-width="1.500" fill="none"/></svg>
<div class="cb" style="left:377px;top:360px"></div><svg class="a" style="left:377px;top:360px" width="13" height="13" viewBox="0 0 13 13"><path d="M3.300 6.400L5.600 9L10.100 4.300" stroke="#0c79bd" stroke-width="1.500" fill="none"/></svg>
<div class="t r" style="right:437.7px;top:361px">2017</div>
<div class="t r" style="right:372.7px;top:361px">1574</div>
<div class="t" style="left:510.40px;top:361px;transform:scaleX(0.842)">USD</div>
<div class="t r" style="right:244.3px;top:361px">1</div>
<div class="t r" style="right:156.7px;top:361px">0.00</div>
<div class="t r" style="right:70.7px;top:361px">482.39</div>
<div class="t" style="left:811.90px;top:361px;transform:scaleX(0.887)">201803221...</div>
<div class="sel" style="left:0;top:378px;height:41px"></div><div class="bl" style="left:0;top:419px;width:15px;height:1px"></div>
<div class="alt" style="left:16px;top:378px;width:861px"></div>
<div class="vl" style="left:190px;top:378px;height:21px"></div>
<div class="vl" style="left:291px;top:378px;height:21px"></div>
<div class="vl" style="left:390px;top:378px;height:21px"></div>
<div class="vl" style="left:166px;top:399px;height:21px"></div>
<div class="vl" style="left:252px;top:399px;height:21px"></div>
<div class="vl" style="left:295px;top:399px;height:21px"></div>
<div class="vl" style="left:338px;top:399px;height:21px"></div>
<div class="vl" style="left:368px;top:399px;height:21px"></div>
<div class="vl" style="left:398px;top:399px;height:21px"></div>
<div class="vl" style="left:441px;top:399px;height:21px"></div>
<div class="vl" style="left:506px;top:399px;height:21px"></div>
<div class="vl" style="left:571px;top:399px;height:21px"></div>
<div class="vl" style="left:636px;top:399px;height:21px"></div>
<div class="vl" style="left:722px;top:399px;height:21px"></div>
<div class="vl" style="left:808px;top:399px;height:21px"></div>
<div class="t" style="left:19.2px;top:382px;color:#000">000001230</div>
<div class="t r" style="right:588.7px;top:382px">0.00</div>
<div class="t r" style="right:489.2px;top:382px">348.06</div>
<div class="t" style="left:393.5px;top:382px">Part</div>
<div class="t" style="left:19.2px;top:403px">SD</div>
<div class="t" style="left:198.20px;top:403px;transform:scaleX(0.963)">3/22/2018</div>
<div class="t r" style="right:583.7px;top:403px">6</div>
<div class="t" style="left:299px;top:403px">SD</div>
<div class="cb" style="left:347px;top:402px"></div><svg class="a" style="left:347px;top:402px" width="13" height="13" viewBox="0 0 13 13"><path d="M3.300 6.400L5.600 9L10.100 4.300" stroke="#0c79bd" stroke-width="1.500" fill="none"/></svg>
<div class="cb" style="left:377px;top:402px"></div><svg class="a" style="left:377px;top:402px" width="13" height="13" viewBox="0 0 13 13"><path d="M3.300 6.400L5.600 9L10.100 4.300" stroke="#0c79bd" stroke-width="1.500" fill="none"/></svg>
<div class="t r" style="right:437.7px;top:403px">2017</div>
<div class="t r" style="right:372.7px;top:403px">1573</div>
<div class="t" style="left:510.40px;top:403px;transform:scaleX(0.842)">USD</div>
<div class="t r" style="right:244.3px;top:403px">1</div>
<div class="t r" style="right:156.7px;top:403px">0.00</div>
<div class="t r" style="right:70.7px;top:403px">348.06</div>
<div class="t" style="left:811.90px;top:403px;transform:scaleX(0.887)">201803221...</div>
</div>
<div class="a" style="left:892px;top:171px;width:17px;height:422px;background:linear-gradient(90deg,#e4e4e4,#fff 45%);border-left:1px solid #4e9fe0;border-right:1px solid #4e9fe0"></div>
<div class="a" style="left:892px;top:154px;width:17px;height:17px;border:1px solid #0c79bd;border-radius:3px;background:linear-gradient(90deg,#fff 0,#fafafa 20%,#f0f0f0 45%,#e6e6e6 60%,#d8d8d8 75%,#d6d6d6 92%,#f0f0f0 100%)"></div>
<svg class="a" style="left:892px;top:154px" width="17" height="17" viewBox="0 0 17 17"><path d="M5.300 10.300L8.500 6.800L11.700 10.300" stroke="#0c79bd" stroke-width="1.400" fill="none"/></svg>
<div class="a" style="left:892px;top:172px;width:17px;height:55px;border:1px solid #0c79bd;border-radius:3px;background:linear-gradient(90deg,#fff 0,#fafafa 20%,#f0f0f0 45%,#e6e6e6 60%,#d8d8d8 75%,#d6d6d6 92%,#f0f0f0 100%)"></div>
<div class="a" style="left:898px;top:197px;width:6px;height:1px;background:#0c79bd;box-shadow:0 2px #0c79bd,0 4px #0c79bd"></div>
<div class="a" style="left:892px;top:592px;width:17px;height:17px;border:1px solid #0c79bd;border-radius:3px;background:linear-gradient(90deg,#fff 0,#fafafa 20%,#f0f0f0 45%,#e6e6e6 60%,#d8d8d8 75%,#d6d6d6 92%,#f0f0f0 100%)"></div>
<svg class="a" style="left:892px;top:592px" width="17" height="17" viewBox="0 0 17 17"><path d="M5.300 6.500L8.500 10L11.700 6.500" stroke="#0c79bd" stroke-width="1.400" fill="none"/></svg>
<div class="s" style="left:290.9px;top:625px;transform:scaleX(0.906);">Total Debits</div>
<div class="a" style="left:291px;top:647px;width:143px;height:19px;background:#eee;border:1px solid #adadad"></div>
<div class="t" style="left:383.00px;top:651px;transform:scaleX(0.881)">21,708.76</div>
<div class="s" style="left:445.0px;top:625px;transform:scaleX(0.910);">Total Credits</div>
<div class="a" style="left:445px;top:647px;width:148px;height:19px;background:#eee;border:1px solid #adadad"></div>
<div class="t" style="left:542.40px;top:651px;transform:scaleX(0.881)">21,708.76</div>
<div class="s" style="left:603.5px;top:625px;transform:scaleX(0.867);">Debits Balance</div>
<div class="a" style="left:604px;top:647px;width:149px;height:19px;background:#eee;border:1px solid #adadad"></div>
<div class="t" style="left:729.00px;top:651px;transform:scaleX(0.863)">0.00</div>
<div class="s" style="left:763.5px;top:625px;transform:scaleX(0.874);">Credits Balance</div>
<div class="a" style="left:764px;top:647px;width:147px;height:19px;background:#eee;border:1px solid #adadad"></div>
<div class="t" style="left:886.50px;top:651px;transform:scaleX(0.863)">0.00</div>
</body></html>
